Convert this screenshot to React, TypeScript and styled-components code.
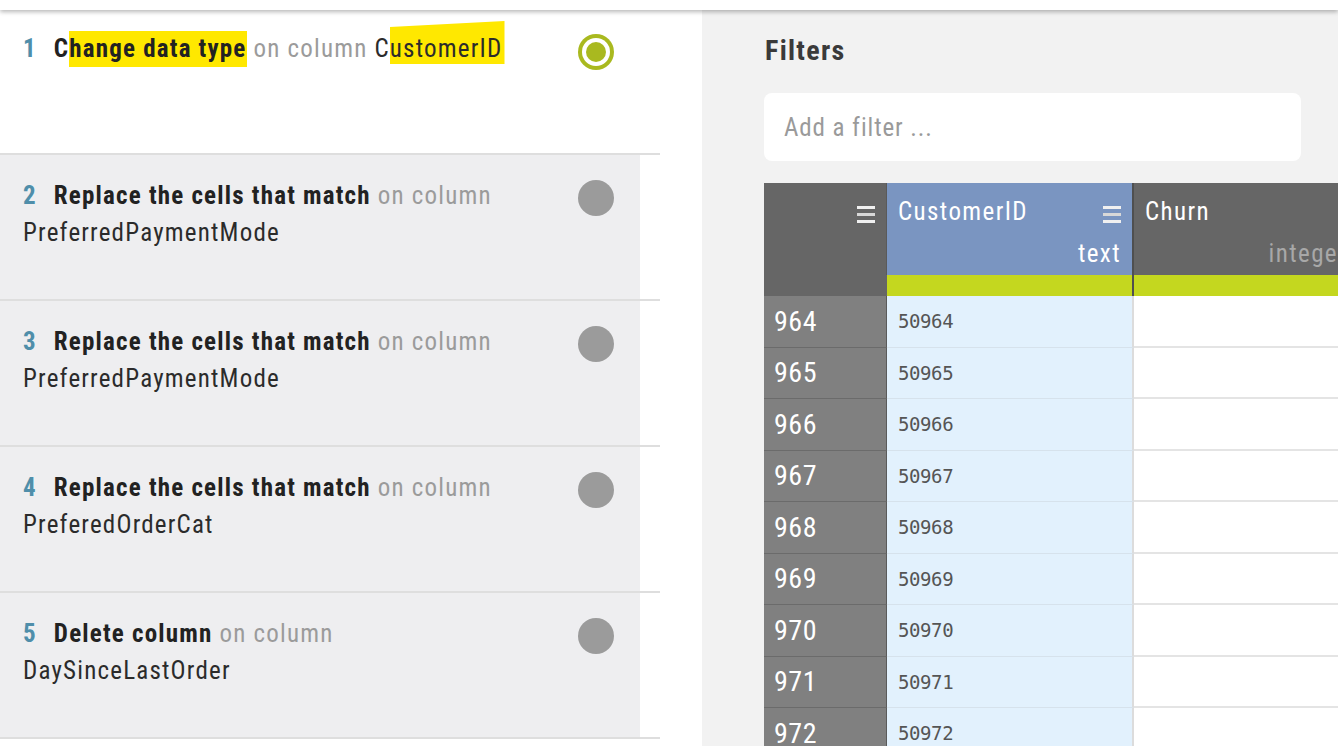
import React from "react";
import styled, { createGlobalStyle } from "styled-components";

const FONT = `"Liberation Sans Narrow", "Roboto Condensed", "Liberation Sans", sans-serif`;

const GlobalStyle = createGlobalStyle`
  html, body { margin: 0; padding: 0; overflow: hidden; background: #fff; }
  body { font-family: ${FONT}; }
  * { box-sizing: border-box; }
`;

const Page = styled.div`
  width: 1338px;
  height: 746px;
  display: flex;
  flex-direction: column;
  overflow: hidden;
`;

const TopBar = styled.div`
  height: 10px;
  flex: none;
  background: #fff;
  box-shadow: 0 2px 4px rgba(0, 0, 0, 0.28);
  position: relative;
  z-index: 2;
`;

const Main = styled.div`
  flex: 1;
  display: flex;
  min-height: 0;
`;

const StepsPanel = styled.div`
  width: 702px;
  flex: none;
  background: #fff;
  display: flex;
  flex-direction: column;
`;

const Step = styled.div<{ $first?: boolean }>`
  width: 660px;
  height: ${(p) => (p.$first ? 145 : 146)}px;
  flex: none;
  border-bottom: 2px solid #dedede;
  display: flex;
`;

const StepBody = styled.div<{ $active?: boolean; $first?: boolean }>`
  width: 640px;
  background: ${(p) => (p.$active ? "#fff" : "#eeeef0")};
  display: flex;
  justify-content: space-between;
  align-items: flex-start;
  padding: ${(p) => (p.$first ? "20px" : "22px")} 26px 0 23px;
`;

const StepText = styled.div`
  font-size: 25px;
  letter-spacing: 1.2px;
  line-height: 37px;
  color: #2b2b2b;
  width: 520px;
`;

const Num = styled.span`
  color: #4f8eaa;
  font-weight: 700;
  margin-right: 17px;
`;

const Action = styled.span`
  font-weight: 700;
  color: #222;
`;

const Muted = styled.span`
  color: #9b9b9b;
`;

const Hl = styled.span<{ $slant?: boolean }>`
  background: #ffe800;
  padding: ${(p) => (p.$slant ? "13px 2px 1px 0" : "3px 0 4px")};
  clip-path: ${(p) =>
    p.$slant ? "polygon(0 14%, 100% 0, 100% 100%, 0 100%)" : "none"};
`;

const Indicator = styled.div<{ $active?: boolean }>`
  width: 36px;
  height: 36px;
  border-radius: 50%;
  flex: none;
  margin-top: ${(p) => (p.$active ? 4 : 3)}px;
  background: ${(p) => (p.$active ? "#a9b91f" : "#9b9b9b")};
  display: flex;
  align-items: center;
  justify-content: center;
  &::after {
    content: "";
    display: ${(p) => (p.$active ? "block" : "none")};
    width: 20px;
    height: 20px;
    border-radius: 50%;
    background: #a9b91f;
    box-shadow: 0 0 0 4px #fff;
  }
`;

const DataPanel = styled.div`
  flex: 1;
  min-width: 0;
  background: #f2f2f2;
  padding: 26px 0 0 62px;
  overflow: hidden;
`;

const Title = styled.h2`
  margin: 0 0 0 1px;
  font-size: 28px;
  letter-spacing: 1.3px;
  line-height: 30px;
  font-weight: 700;
  color: #3a3a3a;
`;

const FilterBox = styled.div`
  margin-top: 27px;
  width: 537px;
  height: 68px;
  background: #fff;
  border-radius: 8px;
  display: flex;
  align-items: center;
  padding-left: 20px;
  font-size: 25px;
  letter-spacing: 0.9px;
  color: #9a9a9a;
`;

const Grid = styled.div`
  margin-top: 22px;
  display: grid;
  grid-template-columns: 123px 247px 225px;
  width: 595px;
`;

const HeadCell = styled.div<{ $bg: string; $divider?: boolean }>`
  height: 92px;
  background: ${(p) => p.$bg};
  border-right: ${(p) => (p.$divider ? "2px solid #4f4f4f" : "1px solid #5a5a5a")};
  display: flex;
  flex-direction: column;
  padding: 13px 11px 0 11px;
  color: #fff;
  font-size: 25px;
  letter-spacing: 1.4px;
  line-height: 32px;
`;

const HeadTop = styled.div<{ $end?: boolean }>`
  height: 32px;
  display: flex;
  justify-content: ${(p) => (p.$end ? "flex-end" : "space-between")};
  align-items: center;
  & > svg {
    margin-top: 4px;
  }
`;

const HeadName = styled.span`
  color: #fff;
`;

const HeadType = styled.span<{ $dim?: boolean }>`
  align-self: flex-end;
  margin-top: 10px;
  color: ${(p) => (p.$dim ? "#a8a8a8" : "#fff")};
  white-space: nowrap;
`;

const Bar = styled.div<{ $bg: string; $divider?: boolean }>`
  height: 21px;
  background: ${(p) => p.$bg};
  border-right: ${(p) => (p.$divider ? "2px solid #4f4f4f" : "none")};
`;

const RowNum = styled.div`
  height: 51.5px;
  background: #808080;
  border-bottom: 1px solid #6b6b6b;
  border-right: 1px solid #5a5a5a;
  color: #fff;
  font-size: 28px;
  letter-spacing: 0.5px;
  display: flex;
  align-items: center;
  padding-left: 10px;
`;

const IdCell = styled.div`
  height: 51.5px;
  background: #e2f1fd;
  border-bottom: 1px solid #d6e2ec;
  border-right: 2px solid #dcdcdc;
  color: #555;
  font-family: "DejaVu Sans Mono", "Liberation Mono", monospace;
  font-size: 19px;
  letter-spacing: -0.4px;
  display: flex;
  align-items: center;
  padding-left: 11px;
`;

const EmptyCell = styled.div`
  height: 51.5px;
  background: #fff;
  border-bottom: 2px solid #e4e4e4;
`;

const MenuIcon = () => (
  <svg width="18" height="20" viewBox="0 0 18 20">
    <rect x="0" y="2" width="18" height="3" fill="#f0f0f0" />
    <rect x="0" y="9" width="18" height="3" fill="#d8d8d8" />
    <rect x="0" y="16" width="18" height="3" fill="#f0f0f0" />
  </svg>
);

const steps = [
  { n: 2, action: "Replace the cells that match", col: "PreferredPaymentMode" },
  { n: 3, action: "Replace the cells that match", col: "PreferredPaymentMode" },
  { n: 4, action: "Replace the cells that match", col: "PreferedOrderCat" },
  { n: 5, action: "Delete column", col: "DaySinceLastOrder" },
];

const rows = [964, 965, 966, 967, 968, 969, 970, 971, 972];

export default function App() {
  return (
    <Page>
      <GlobalStyle />
      <TopBar />
      <Main>
        <StepsPanel>
          <Step $first>
            <StepBody $active $first>
              <StepText>
                <Num>1</Num>
                <Action>
                  C<Hl>hange data type</Hl>
                </Action>{" "}
                <Muted>on column</Muted> C<Hl $slant>ustomerID</Hl>
              </StepText>
              <Indicator $active />
            </StepBody>
          </Step>
          {steps.map((s) => (
            <Step key={s.n}>
              <StepBody>
                <StepText>
                  <Num>{s.n}</Num>
                  <Action>{s.action}</Action> <Muted>on column</Muted>
                  <br />
                  {s.col}
                </StepText>
                <Indicator />
              </StepBody>
            </Step>
          ))}
        </StepsPanel>
        <DataPanel>
          <Title>Filters</Title>
          <FilterBox>Add a filter ...</FilterBox>
          <Grid>
            <HeadCell $bg="#666666">
              <HeadTop $end>
                <MenuIcon />
              </HeadTop>
            </HeadCell>
            <HeadCell $bg="#7a95c1" $divider>
              <HeadTop>
                <HeadName>CustomerID</HeadName>
                <MenuIcon />
              </HeadTop>
              <HeadType>text</HeadType>
            </HeadCell>
            <HeadCell $bg="#666666">
              <HeadTop>
                <HeadName>Churn</HeadName>
              </HeadTop>
              <HeadType $dim>integer</HeadType>
            </HeadCell>
            <Bar $bg="#666666" />
            <Bar $bg="#c4d71f" $divider />
            <Bar $bg="#c4d71f" />
            {rows.map((r) => (
              <React.Fragment key={r}>
                <RowNum>{r}</RowNum>
                <IdCell>{50000 + r}</IdCell>
                <EmptyCell />
              </React.Fragment>
            ))}
          </Grid>
        </DataPanel>
      </Main>
    </Page>
  );
}
